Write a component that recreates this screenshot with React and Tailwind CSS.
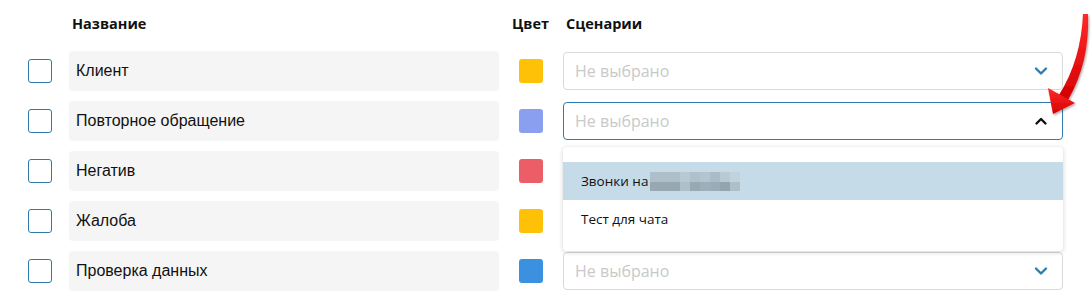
import React from "react";

const rows = [
  { name: "Клиент", color: "bg-[#ffc107]", state: "closed" },
  { name: "Повторное обращение", color: "bg-[#8a9ff0]", state: "open" },
  { name: "Негатив", color: "bg-[#eb5e67]", state: "hidden" },
  { name: "Жалоба", color: "bg-[#ffc107]", state: "hidden" },
  { name: "Проверка данных", color: "bg-[#3b91df]", state: "closed" },
];

function ChevronDown() {
  return (
    <svg width="14" height="10" viewBox="0 0 14 10">
      <path d="M2 2.5 L7 7.5 L12 2.5" fill="none" stroke="#2f7db0" strokeWidth="2.4" strokeLinecap="round" strokeLinejoin="round" />
    </svg>
  );
}

function ChevronUp() {
  return (
    <svg width="14" height="10" viewBox="0 0 14 10">
      <path d="M2.5 7.5 L7 3 L11.5 7.5" fill="none" stroke="#111" strokeWidth="2.4" strokeLinecap="round" strokeLinejoin="round" />
    </svg>
  );
}

function Pixelated() {
  const top = ["#aebfca", "#aebfca", "#aebfca", "#b7cad4", "#afc1cc", "#b3c5cf", "#aabcc7", "#b8cad4", "#c1d3dd"];
  const bot = ["#97a8b2", "#97a8b2", "#97a8b2", "#aec0c9", "#98a9b4", "#9dafb8", "#9aacb7", "#94a5af", "#adbfc9"];
  return (
    <svg width="90" height="19" viewBox="0 0 90 19" className="ml-[2px]">
      {top.map((c, i) => (
        <rect key={"t" + i} x={i * 10} y="0" width="10" height="10" fill={c} />
      ))}
      {bot.map((c, i) => (
        <rect key={"b" + i} x={i * 10} y="10" width="10" height="9" fill={c} />
      ))}
    </svg>
  );
}

function Select({ state }) {
  const open = state === "open";
  return (
    <div
      className={
        "w-[500px] h-[38px] rounded-[4px] flex items-center justify-between pl-[11px] pr-[14px] bg-white " +
        (open ? "border border-[#2f7db0]" : "border border-[#d9d9d9]")
      }
    >
      <span className="text-[16px] text-[#c9c9c9] font-['Open_Sans',sans-serif] leading-none">Не выбрано</span>
      {open ? <ChevronUp /> : <ChevronDown />}
    </div>
  );
}

export default function App() {
  return (
    <div className="relative w-[1092px] h-[305px] bg-white overflow-hidden">
      <div className="flex flex-col pl-[28px]">
        <div className="h-[51px] flex items-center font-['Open_Sans',sans-serif] font-bold text-[14.5px] text-[#111] pb-[4px]">
          <span className="ml-[44px] w-[440px]">Название</span>
          <span className="w-[54px]">Цвет</span>
          <span>Сценарии</span>
        </div>
        <div className="flex flex-col gap-[10px]">
          {rows.map((r) => (
            <div key={r.name} className="h-[40px] flex items-center">
              <div className="w-[24px] h-[24px] rounded-[3px] border-[1.5px] border-[#2d7bab] bg-white" />
              <div className="ml-[17px] w-[430px] h-[40px] rounded-[4px] bg-[#f5f5f5] flex items-center pl-[7px] text-[16px] text-[#111] font-['Liberation_Sans',Arial,sans-serif]">
                {r.name}
              </div>
              <div className={"ml-[20px] w-[24px] h-[24px] rounded-[3px] " + r.color} />
              <div className="ml-[20px]">
                {r.state === "hidden" ? <div className="w-[500px] h-[38px]" /> : <Select state={r.state} />}
              </div>
            </div>
          ))}
        </div>
      </div>

      <div className="absolute left-[563px] top-[147px] w-[500px] h-[104px] bg-white rounded-[4px] shadow-[0_1px_5px_rgba(0,0,0,0.18)] pt-[15px] font-['Open_Sans',sans-serif] text-[13.5px] text-[#111]">
        <div className="h-[38px] bg-[#c5dbe7] flex items-center pl-[18px]">
          <span>Звонки на</span>
          <Pixelated />
        </div>
        <div className="h-[38px] flex items-center pl-[18px]">Тест для чата</div>
      </div>

      <svg className="absolute left-0 top-0 pointer-events-none" width="1092" height="305" viewBox="0 0 1092 305">
        <defs>
          <linearGradient id="ag" x1="0" y1="0" x2="0" y2="1">
            <stop offset="0" stopColor="#ff2a2a" />
            <stop offset="1" stopColor="#d40000" />
          </linearGradient>
          <filter id="sh" x="-50%" y="-50%" width="200%" height="200%">
            <feDropShadow dx="1" dy="1.5" stdDeviation="1.2" floodColor="#000" floodOpacity="0.35" />
          </filter>
        </defs>
        <g filter="url(#sh)">
          <path d="M1083 14 Q1081 60 1059 95 L1068 100 Q1090 62 1088 14 Z" fill="url(#ag)" />
          <path d="M1048 88 L1075 103 L1053 114 Z" fill="url(#ag)" />
        </g>
      </svg>
    </div>
  );
}
